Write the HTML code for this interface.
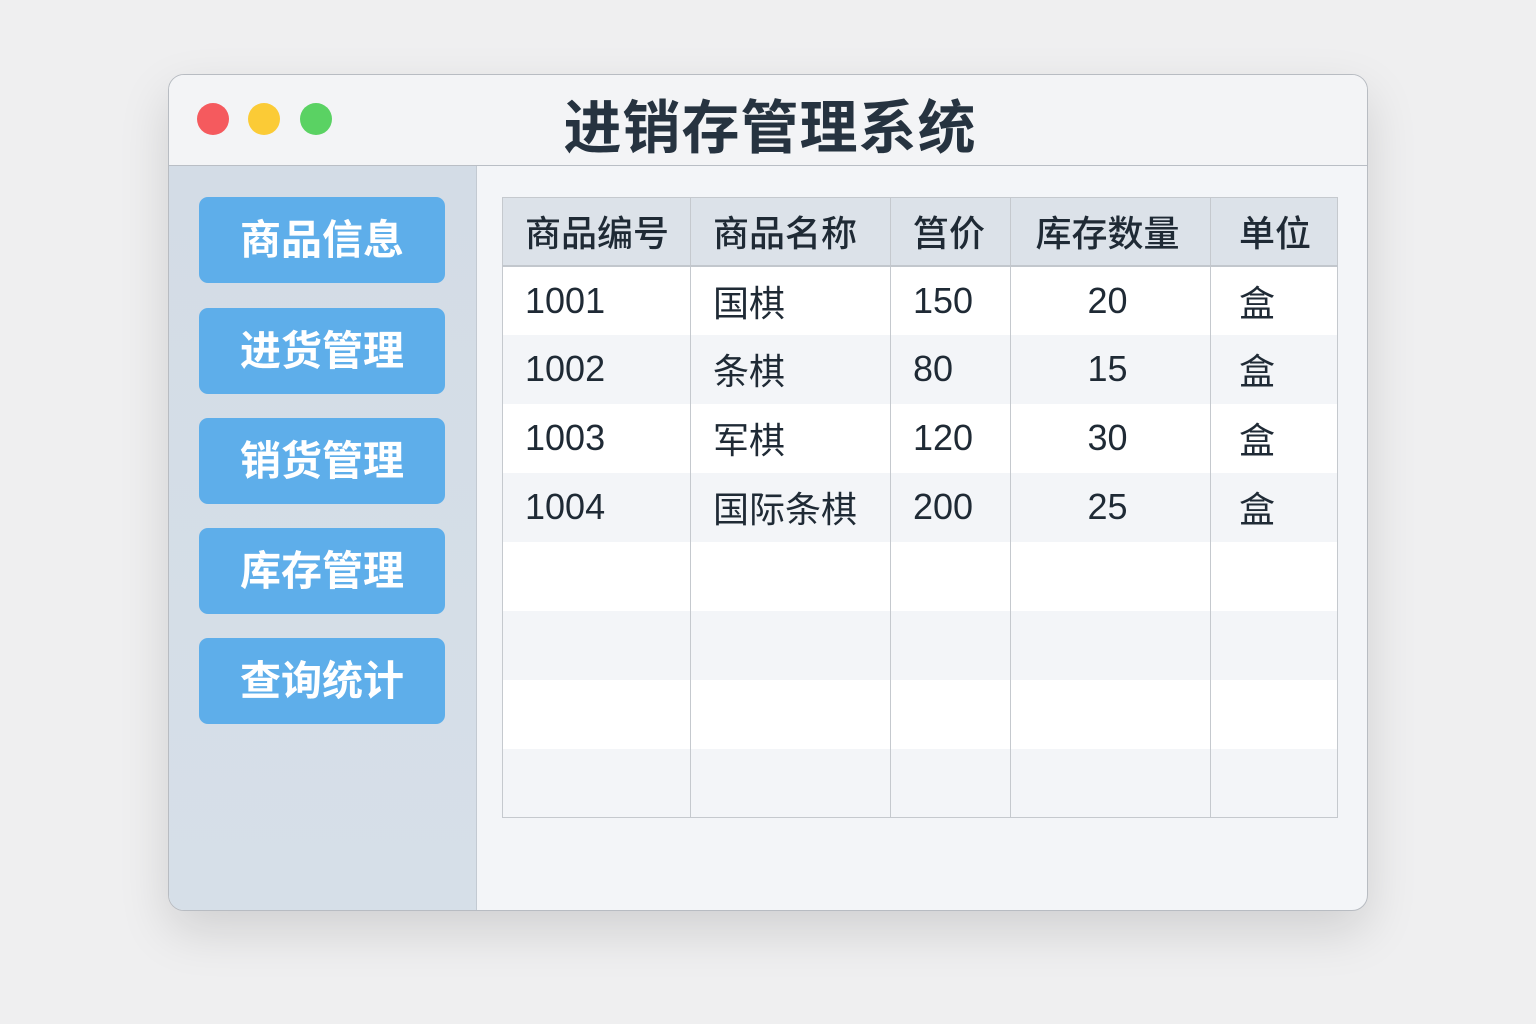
<!DOCTYPE html><html><head><meta charset="utf-8"><style>
body{margin:0;width:1536px;height:1024px;background:#efeff0;font-family:"Liberation Sans","Noto Sans CJK SC",sans-serif;position:relative;overflow:hidden}
.win{position:absolute;left:168px;top:74px;width:1198px;height:835px;border:1px solid #b8bcc2;border-radius:16px;background:#f3f5f8;overflow:hidden;box-shadow:0 20px 50px rgba(0,0,0,0.13)}
.tb{position:absolute;left:0;top:0;width:100%;height:90px;border-bottom:1px solid #b9bec5;background:#f3f4f6}
.dot{position:absolute;top:28px;width:32px;height:32px;border-radius:50%}
.title{position:absolute;left:0;width:100%;top:6px;text-align:center;font-size:58px;font-weight:bold;color:#263340;letter-spacing:1px;padding-left:2px}
.side{position:absolute;left:0;top:91px;width:307px;bottom:0;background:linear-gradient(#d3dce6,#d6dfe8);border-right:1px solid #c3cad2}
.btn{position:absolute;left:30px;width:246px;height:86px;border-radius:9px;background:#5eaeea;color:#fff;font-size:41px;font-weight:bold;text-align:center;line-height:86px;letter-spacing:0px}
table{position:absolute;left:333px;top:122px;border-collapse:collapse;font-size:36px;color:#1f2a35}
td,th{border-left:1px solid #c5c9ce;border-right:1px solid #c5c9ce;height:69px;padding:0 0 0 22px;text-align:left;box-sizing:border-box}
th{background:#dce2e9;font-weight:500;border-bottom:2px solid #c2c7cd;border-top:1px solid #c5c9ce;height:68px}
tr:nth-child(odd) td{background:#f3f5f8}tr:nth-child(even) td{background:#fff}
tr:last-child td{border-bottom:1px solid #c5c9ce}
.c{text-align:center;padding:0 6px 0 0}
.u{padding-left:28px}
</style></head><body>
<div class="win">
<div class="tb"><div class="dot" style="left:28px;background:#f55a5e"></div><div class="dot" style="left:79px;background:#fbcb36"></div><div class="dot" style="left:131px;background:#5ad263"></div>
<div class="title">进销存管理系统</div></div>
<div class="side">
<div class="btn" style="top:31px">商品信息</div>
<div class="btn" style="top:142px">进货管理</div>
<div class="btn" style="top:252px">销货管理</div>
<div class="btn" style="top:362px">库存管理</div>
<div class="btn" style="top:472px">查询统计</div>
</div>
<table>
<tr><th style="width:188px">商品编号</th><th style="width:200px">商品名称</th><th style="width:120px">筥价</th><th class="c" style="width:200px">库存数量</th><th class="u" style="width:127px">单位</th></tr>
<tr><td>1001</td><td>国棋</td><td>150</td><td class="c">20</td><td class="u">盒</td></tr>
<tr><td>1002</td><td>条棋</td><td>80</td><td class="c">15</td><td class="u">盒</td></tr>
<tr><td>1003</td><td>军棋</td><td>120</td><td class="c">30</td><td class="u">盒</td></tr>
<tr><td>1004</td><td>国际条棋</td><td>200</td><td class="c">25</td><td class="u">盒</td></tr>
<tr><td></td><td></td><td></td><td></td><td></td></tr>
<tr><td></td><td></td><td></td><td></td><td></td></tr>
<tr><td></td><td></td><td></td><td></td><td></td></tr>
<tr><td></td><td></td><td></td><td></td><td></td></tr>
</table>
</div>
</body></html>
